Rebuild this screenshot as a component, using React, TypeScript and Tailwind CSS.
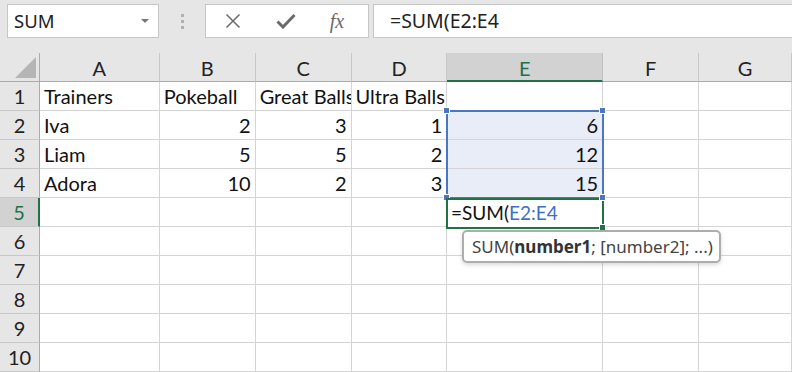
import React from "react";

const cols = ["A", "B", "C", "D", "E", "F", "G"];
const colW = ["w-[120px]", "w-[96px]", "w-[96px]", "w-[96px]", "w-[156px]", "w-[96px]", "w-[93px]"];

type Cell = { t: string; r?: boolean };
const data: Record<number, Cell[]> = {
  1: [{ t: "Trainers" }, { t: "Pokeball" }, { t: "Great Balls" }, { t: "Ultra Balls" }, { t: "" }, { t: "" }, { t: "" }],
  2: [{ t: "Iva" }, { t: "2", r: true }, { t: "3", r: true }, { t: "1", r: true }, { t: "6", r: true }, { t: "" }, { t: "" }],
  3: [{ t: "Liam" }, { t: "5", r: true }, { t: "5", r: true }, { t: "2", r: true }, { t: "12", r: true }, { t: "" }, { t: "" }],
  4: [{ t: "Adora" }, { t: "10", r: true }, { t: "2", r: true }, { t: "3", r: true }, { t: "15", r: true }, { t: "" }, { t: "" }],
};

const cellFont = { fontFamily: "Lato, 'Liberation Sans', sans-serif" };
const uiFont = { fontFamily: "'Noto Sans', 'Open Sans', sans-serif" };

function Handle({ cls }: { cls: string }) {
  return <div className={`absolute w-[7px] h-[7px] border border-white ${cls}`} />;
}

export default function App() {
  const rows = Array.from({ length: 10 }, (_, i) => i + 1);
  return (
    <div className="relative w-[792px] h-[372px] overflow-hidden bg-[#e6e6e6]">
      {/* Toolbar */}
      <div className="flex h-[53px] items-start pt-[4px] pl-[7px]" style={uiFont}>
        <div className="flex h-[34px] w-[152px] items-center justify-between border border-[#c6c6c6] bg-white pl-[6px] pr-[9px]">
          <span className="text-[18.5px] text-[#222]">SUM</span>
          <svg width="8" height="5" viewBox="0 0 8 5"><path d="M0 0h8L4 4z" fill="#777" /></svg>
        </div>
        <div className="flex h-[34px] w-[46px] flex-col items-center justify-center gap-[3px]">
          <div className="h-[3px] w-[3px] bg-[#b0b0b0]" />
          <div className="h-[3px] w-[3px] bg-[#b0b0b0]" />
          <div className="h-[3px] w-[3px] bg-[#b0b0b0]" />
        </div>
        <div className="flex h-[34px] w-[164px] items-center border border-[#c6c6c6] bg-white">
          <div className="flex w-[54px] justify-center">
            <svg width="16" height="16" viewBox="0 0 16 16"><path d="M1.5 1.5L14.5 14.5M14.5 1.5L1.5 14.5" stroke="#6a6a6a" strokeWidth="1.5" /></svg>
          </div>
          <div className="flex w-[52px] justify-center">
            <svg width="20" height="16" viewBox="0 0 20 16"><path d="M1.5 8.5L7 14L18.5 2" fill="none" stroke="#6a6a6a" strokeWidth="3" /></svg>
          </div>
          <div className="flex w-[50px] justify-center">
            <span className="text-[20px] italic text-[#6a6a6a]" style={{ fontFamily: "'Liberation Serif', serif" }}>fx</span>
          </div>
        </div>
        <div className="ml-[4px] flex h-[34px] flex-1 items-center border border-[#c6c6c6] border-r-0 bg-white pl-[16px]">
          <span className="text-[19.5px] text-[#222]">=SUM(E2:E4</span>
        </div>
      </div>

      {/* Grid */}
      <div className="relative" style={cellFont}>
        {/* Header row */}
        <div className="flex h-[29px]">
          <div className="relative w-[40px] border-r border-b border-[#ababab] bg-[#e6e6e6]">
            <svg className="absolute left-[15px] top-[4px]" width="21" height="21" viewBox="0 0 21 21"><path d="M21 0V21H0z" fill="#b5b5b5" /></svg>
          </div>
          {cols.map((c, i) =>
            c === "E" ? (
              <div key={c} className={`${colW[i]} flex items-center justify-center border-r border-b-2 border-r-[#c0c0c0] border-b-[#217346] bg-[#d2d2d2] text-[20px] text-[#217346] pt-[2px]`}>
                {c}
              </div>
            ) : (
              <div key={c} className={`${colW[i]} flex items-center justify-center border-r border-b border-r-[#c8c8c8] border-b-[#ababab] bg-[#e6e6e6] text-[20px] text-[#222] pt-[1px]`}>
                {c}
              </div>
            )
          )}
        </div>
        {rows.map((r) => (
          <div key={r} className="flex h-[29px]">
            {r === 5 ? (
              <div className="flex w-[40px] items-center justify-center border-r-2 border-b border-r-[#217346] border-b-[#c8c8c8] bg-[#d2d2d2] text-[20px] text-[#217346]">
                {r}
              </div>
            ) : (
              <div className="flex w-[40px] items-center justify-center border-r border-b border-r-[#ababab] border-b-[#c8c8c8] bg-[#e6e6e6] text-[20px] text-[#222]">
                {r}
              </div>
            )}
            {cols.map((c, i) => {
              const cell = data[r]?.[i];
              const sel = c === "E" && r >= 2 && r <= 4;
              const overflow = r === 1 && c === "D";
              return (
                <div
                  key={c}
                  className={`${colW[i]} flex items-center border-r border-b border-[#d4d4d4] ${sel ? "bg-[#e8edf7]" : "bg-white"} ${cell?.r ? "justify-end pr-[4px]" : "pl-[4px]"} ${overflow ? "overflow-visible" : "overflow-hidden"} whitespace-nowrap text-[20px] text-[#111]`}
                >
                  {cell?.t}
                </div>
              );
            })}
          </div>
        ))}

        {/* Selection range E2:E4 */}
        <div className="pointer-events-none absolute left-[446px] top-[57px] h-[89px] w-[158px] border-2 border-[#4a76c2]" />
        <Handle cls="left-[443px] top-[54px] bg-[#4a76c2]" />
        <Handle cls="left-[599px] top-[54px] bg-[#4a76c2]" />
        <Handle cls="left-[443px] top-[141px] bg-[#4a76c2]" />

        {/* Active cell E5 */}
        <div className="absolute left-[446px] top-[145px] flex h-[31px] w-[158px] items-center border-2 border-[#217346] bg-white pl-[3px] text-[19px] text-[#111]">
          <span>=SUM(</span>
          <span className="text-[#3f6fc6]">E2:E4</span>
        </div>
        <Handle cls="left-[599px] top-[141px] bg-[#4a76c2]" />
        <Handle cls="left-[599px] top-[171px] bg-[#217346]" />

        {/* Tooltip */}
        <div
          className="absolute left-[462px] top-[177px] flex h-[33px] w-[259px] items-center rounded-[5px] border-2 border-[#adadad] bg-white pl-[8px] text-[17px] text-[#444] shadow-[0_2px_4px_rgba(0,0,0,0.15)]"
          style={uiFont}
        >
          <span>SUM(</span>
          <span className="font-bold text-[#333]">number1</span>
          <span>; [number2]; ...)</span>
        </div>
      </div>
    </div>
  );
}
